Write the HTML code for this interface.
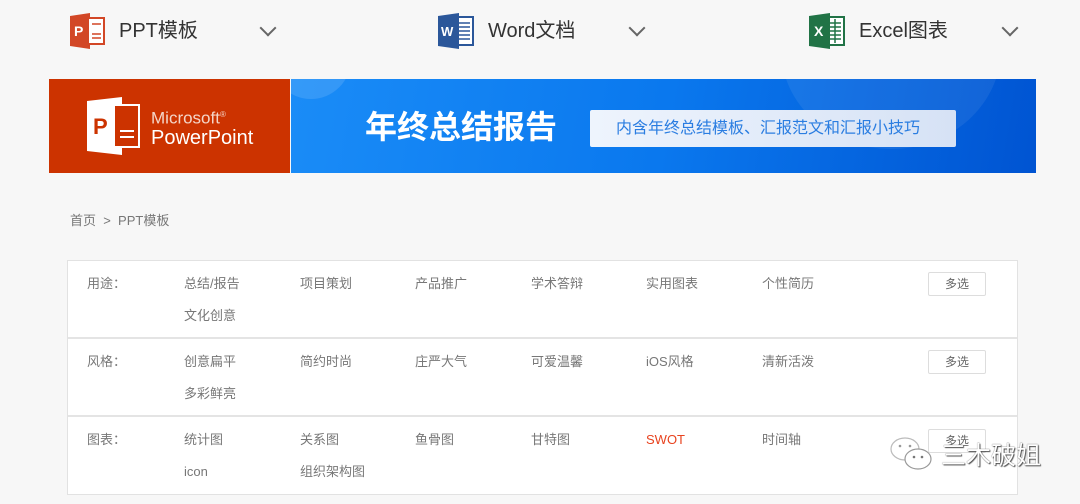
<!DOCTYPE html>
<html><head><meta charset="utf-8"><style>
*{margin:0;padding:0;box-sizing:border-box}
body{width:1080px;height:504px;background:#f7f7f7;position:relative;overflow:hidden;font-family:"Liberation Sans","Noto Sans CJK SC",sans-serif}
.a{position:absolute;white-space:nowrap}
.nav{font-size:20px;color:#333;line-height:24px;top:19px}
.chev{top:22px;width:12px;height:12px;border-right:2px solid #666;border-bottom:2px solid #666;transform:rotate(45deg)}
.t{font-size:13px;color:#777;line-height:16px}
.btn{width:58px;height:24px;border:1px solid #ddd;border-radius:2px;background:#fff;font-size:12px;color:#666;text-align:center;line-height:22px}
</style></head><body>
<svg class="a" style="left:68px;top:12px" width="38" height="38" viewBox="0 0 38 38"><path d="M2 4 L22 1 L22 37 L2 34Z" fill="#d24726"/><rect x="20" y="6" width="16" height="26" fill="#fff" stroke="#d24726" stroke-width="2"/><path d="M24 12h9M24 22h9M24 26h9" stroke="#d24726" stroke-width="1.5"/><text x="6" y="24" font-size="14" font-weight="bold" fill="#fff" font-family="Liberation Sans">P</text></svg>
<div class="a nav" style="left:119px">PPT模板</div>
<div class="a chev" style="left:262px"></div>
<svg class="a" style="left:437px;top:12px" width="38" height="38" viewBox="0 0 38 38"><rect x="18" y="5" width="18" height="28" fill="#fff" stroke="#2b579a" stroke-width="2"/><path d="M22 11h11M22 15h11M22 19h11M22 23h11M22 27h11" stroke="#2b579a" stroke-width="1.5"/><path d="M1 4 L22 1 L22 37 L1 34Z" fill="#2b579a"/><text x="4" y="24" font-size="13" font-weight="bold" fill="#fff" font-family="Liberation Sans">W</text></svg>
<div class="a nav" style="left:488px">Word文档</div>
<div class="a chev" style="left:631px"></div>
<svg class="a" style="left:808px;top:12px" width="38" height="38" viewBox="0 0 38 38"><rect x="18" y="5" width="18" height="28" fill="#fff" stroke="#217346" stroke-width="2"/><path d="M22 11h11M22 15h11M22 19h11M22 23h11M22 27h11M27 7v24" stroke="#217346" stroke-width="1.5"/><path d="M1 4 L22 1 L22 37 L1 34Z" fill="#217346"/><text x="6" y="24" font-size="14" font-weight="bold" fill="#fff" font-family="Liberation Sans">X</text></svg>
<div class="a nav" style="left:859px">Excel图表</div>
<div class="a chev" style="left:1004px"></div>
<div class="a" style="left:49px;top:79px;width:241px;height:94px;background:#cc3300"></div>
<svg class="a" style="left:84px;top:97px" width="60" height="58" viewBox="0 0 60 58"><path d="M3 4 L38 0 L38 58 L3 54Z" fill="#fff"/><rect x="30" y="8" width="25" height="42" fill="#cc3300" stroke="#fff" stroke-width="2"/><path d="M36 34h14M36 40h14" stroke="#fff" stroke-width="2"/><text x="9" y="37" font-size="22" font-weight="bold" fill="#cc3300" font-family="Liberation Sans">P</text></svg>
<div class="a" style="left:151px;top:104px;font-size:17px;color:#f4d5c8;line-height:22px">Microsoft<sup style="font-size:8px">®</sup></div>
<div class="a" style="left:151px;top:126px;font-size:20px;color:#fff;line-height:24px">PowerPoint</div>
<div class="a" style="left:291px;top:79px;width:745px;height:94px;background:linear-gradient(100deg,#1a8cf7 0%,#0a78ee 50%,#0054d2 100%);overflow:hidden">
<div class="a" style="left:-20px;top:-60px;width:80px;height:80px;border-radius:50%;background:rgba(255,255,255,.12)"></div>
<div class="a" style="left:490px;top:-130px;width:220px;height:200px;border-radius:50%;background:rgba(255,255,255,.07)"></div>
</div>
<div class="a" style="left:365px;top:107px;font-size:32px;font-weight:bold;color:#fff;line-height:40px">年终总结报告</div>
<div class="a" style="left:590px;top:110px;width:366px;height:37px;background:linear-gradient(90deg,#eef4fd,#d6e2f5);border-radius:2px;font-size:16px;color:#2a7de1;line-height:37px;padding-left:26px">内含年终总结模板、汇报范文和汇报小技巧</div>
<div class="a" style="left:70px;top:213px;font-size:13px;color:#777;line-height:16px">首页 &nbsp;&gt;&nbsp; PPT模板</div>
<div class="a" style="left:67px;top:260px;width:951px;height:235px;background:#fff;border:1px solid #e2e2e2"></div>
<div class="a" style="left:68px;top:337px;width:949px;height:2px;background:#e4e4e4"></div>
<div class="a" style="left:68px;top:415px;width:949px;height:2px;background:#e4e4e4"></div>

<div class="a t" style="left:87px;top:276px">用途：</div>
<div class="a t" style="left:184px;top:276px">总结/报告</div>
<div class="a t" style="left:300px;top:276px">项目策划</div>
<div class="a t" style="left:415px;top:276px">产品推广</div>
<div class="a t" style="left:531px;top:276px">学术答辩</div>
<div class="a t" style="left:646px;top:276px">实用图表</div>
<div class="a t" style="left:762px;top:276px">个性简历</div>
<div class="a t" style="left:184px;top:308px">文化创意</div>
<div class="a btn" style="left:928px;top:272px">多选</div>

<div class="a t" style="left:87px;top:354px">风格：</div>
<div class="a t" style="left:184px;top:354px">创意扁平</div>
<div class="a t" style="left:300px;top:354px">简约时尚</div>
<div class="a t" style="left:415px;top:354px">庄严大气</div>
<div class="a t" style="left:531px;top:354px">可爱温馨</div>
<div class="a t" style="left:646px;top:354px">iOS风格</div>
<div class="a t" style="left:762px;top:354px">清新活泼</div>
<div class="a t" style="left:184px;top:386px">多彩鲜亮</div>
<div class="a btn" style="left:928px;top:350px">多选</div>

<div class="a t" style="left:87px;top:432px">图表：</div>
<div class="a t" style="left:184px;top:432px">统计图</div>
<div class="a t" style="left:300px;top:432px">关系图</div>
<div class="a t" style="left:415px;top:432px">鱼骨图</div>
<div class="a t" style="left:531px;top:432px">甘特图</div>
<div class="a t" style="left:646px;top:432px;color:#e8431f">SWOT</div>
<div class="a t" style="left:762px;top:432px">时间轴</div>
<div class="a t" style="left:184px;top:464px">icon</div>
<div class="a t" style="left:300px;top:464px">组织架构图</div>
<div class="a btn" style="left:928px;top:429px">多选</div>
<svg class="a" style="left:889px;top:436px" width="46" height="38" viewBox="0 0 46 38"><ellipse cx="16" cy="13" rx="14" ry="11" fill="#fff" stroke="#bbb" stroke-width="1.2"/><ellipse cx="29" cy="23" rx="13" ry="10" fill="#fff" stroke="#999" stroke-width="1.2"/><circle cx="11" cy="10" r="1.3" fill="#999"/><circle cx="21" cy="10" r="1.3" fill="#999"/><circle cx="25" cy="21" r="1.3" fill="#777"/><circle cx="33" cy="21" r="1.3" fill="#777"/></svg>
<div class="a" style="left:941px;top:441px;font-size:25px;color:#fff;line-height:30px;text-shadow:0 0 1px #333,1px 1px 1px #555">三木破姐</div>
</body></html>
